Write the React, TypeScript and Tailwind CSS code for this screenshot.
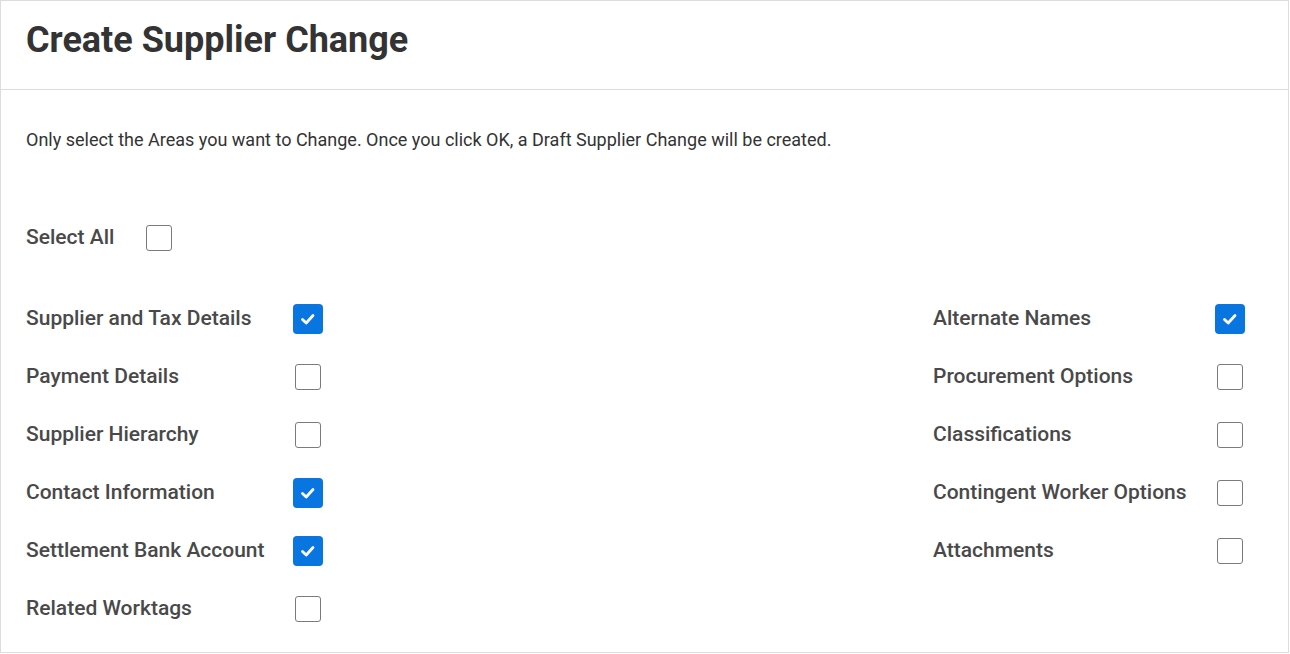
import React from 'react';

interface AreaOption {
  label: string;
  checked: boolean;
}

const leftAreas: AreaOption[] = [
  { label: 'Supplier and Tax Details', checked: true },
  { label: 'Payment Details', checked: false },
  { label: 'Supplier Hierarchy', checked: false },
  { label: 'Contact Information', checked: true },
  { label: 'Settlement Bank Account', checked: true },
  { label: 'Related Worktags', checked: false },
];

const rightAreas: AreaOption[] = [
  { label: 'Alternate Names', checked: true },
  { label: 'Procurement Options', checked: false },
  { label: 'Classifications', checked: false },
  { label: 'Contingent Worker Options', checked: false },
  { label: 'Attachments', checked: false },
];

const CheckBox: React.FC<{ checked: boolean }> = ({ checked }) => (
  <span className="flex h-[30px] w-[30px] items-center justify-center">
    {checked ? (
      <span className="flex h-[30px] w-[30px] items-center justify-center rounded-[4px] bg-[#0875e1]">
        <svg width="20" height="20" viewBox="0 0 20 20" fill="none">
          <path
            d="M4.5 10.5 L8.2 14 L15 6.5"
            stroke="white"
            strokeWidth="2.8"
            strokeLinecap="round"
            strokeLinejoin="round"
          />
        </svg>
      </span>
    ) : (
      <span className="block h-[26px] w-[26px] rounded-[3px] border border-[#7b7b7b] bg-white" />
    )}
  </span>
);

const AreaRow: React.FC<{ item: AreaOption; labelWidth: string }> = ({ item, labelWidth }) => (
  <div className="flex h-[58px] items-center">
    <span className={`${labelWidth} text-[21px] font-medium text-[#494949]`}>{item.label}</span>
    <CheckBox checked={item.checked} />
  </div>
);

export default function App() {
  return (
    <div
      className="h-[654px] w-[1290px] bg-white"
      style={{ fontFamily: 'Roboto, "Liberation Sans", sans-serif' }}
    >
      <div className="flex h-[653px] w-[1289px] flex-col border border-[#dcdcdc]">
        <div className="flex h-[89px] items-center border-b border-[#dcdcdc] px-[25px] pb-[10px]">
          <h1 className="text-[36px] font-bold text-[#333333]">Create Supplier Change</h1>
        </div>
        <div className="px-[25px]">
          <p className="mt-[36px] text-[18px] leading-[28px] text-[#333333]">
            Only select the Areas you want to Change. Once you click OK, a Draft Supplier Change will be created.
          </p>
          <div className="mt-[64px] flex h-[40px] items-center">
            <span className="w-[118px] text-[21px] font-medium text-[#494949]">Select All</span>
            <CheckBox checked={false} />
          </div>
          <div className="mt-[32px] flex">
            <div className="w-[907px]">
              {leftAreas.map((item) => (
                <AreaRow key={item.label} item={item} labelWidth="w-[267px]" />
              ))}
            </div>
            <div>
              {rightAreas.map((item) => (
                <AreaRow key={item.label} item={item} labelWidth="w-[282px]" />
              ))}
            </div>
          </div>
        </div>
      </div>
    </div>
  );
}
